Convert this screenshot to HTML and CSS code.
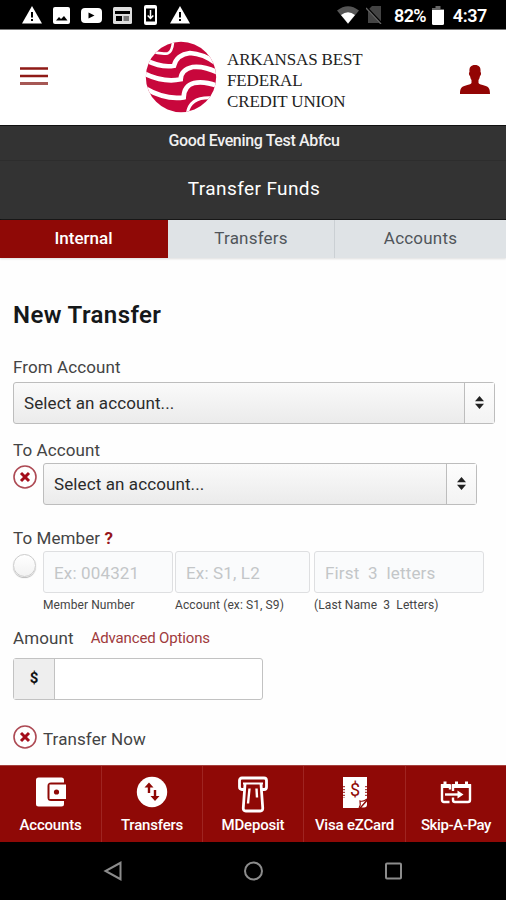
FILE: index.html
```html
<!DOCTYPE html>
<html lang="en">
<head>
    <meta charset="UTF-8">
    <meta name="viewport" content="width=device-width, initial-scale=1.0">
    <title>Transfer Funds</title>
    <link rel="stylesheet" href="styles.css">
</head>
<body>
    <div class="status-bar">
        <div class="status-left">
            <svg width="20" height="18" viewBox="0 0 20 18"><path fill="#fff" d="M10 0L20 17.500H0z"/><path stroke="#000" stroke-width="2" d="M10 6v5.500M10 13v2"/></svg>
            <svg width="17" height="17" viewBox="0 0 17 17"><rect width="17" height="17" rx="2" fill="#fff"/><path d="M3 13.500l3-3.500 2 2 3-3 3.500 4.500z"/></svg>
            <svg width="21" height="15" viewBox="0 0 21 15"><rect width="21" height="15" rx="4" fill="#fff"/><path d="M7.500 4.500l6 3-6 3z"/></svg>
            <svg width="19" height="17" viewBox="0 0 19 17"><rect width="19" height="17" rx="1.500" fill="#ddd"/><path d="M2 4h15v3H2zM3 9h6v5H3z"/><path fill="#777" d="M10.500 9H16v5h-5.500z"/></svg>
            <svg width="13" height="20" viewBox="0 0 13 20"><rect width="13" height="20" rx="2" fill="#fff"/><path d="M2 3.500h9v13H2z"/><path fill="none" stroke="#fff" stroke-width="1.500" d="M6.500 5v8M3.700 10.500l2.800 3 2.800-3"/></svg>
            <svg width="20" height="18" viewBox="0 0 20 18"><path fill="#fff" d="M10 0L20 17.500H0z"/><path stroke="#000" stroke-width="2" d="M10 6v5.500M10 13v2"/></svg>
        </div>
        <div class="status-right">
            <svg class="wifi" width="22" height="18" viewBox="0 0 22 18"><path fill="#555" d="M0 4.500Q11-4 22 4.500L11 18z"/><path fill="#fff" d="M4 9Q11 3.500 18 9l-7 8.500z"/></svg>
            <svg class="sim" width="17" height="18" viewBox="0 0 17 18"><path fill="#444" d="M6 0h9v17H2V4z"/><path stroke="#000" stroke-width="2.500" d="M0 1l16 17"/><path stroke="#666" stroke-width="1.300" d="M0 2l15 16"/></svg>
            <span class="battery-text">82%</span>
            <svg class="battery" width="12" height="19" viewBox="0 0 12 19"><path fill="#666" d="M3.500 0h5v3H12v3H0V2h3.500z"/><path fill="#fff" d="M0 4h12v13.500q0 1.500-1.500 1.500h-9Q0 19 0 17.500z"/></svg>
            <span class="clock">4:37</span>
        </div>
    </div>

    <header class="header">
        <svg class="menu-icon" width="28" height="19" viewBox="0 0 28 19"><path stroke="#8f1a16" stroke-width="2.600" d="M0 1.500h28M0 9h28"/><path stroke="#a65855" stroke-width="3" d="M0 16.500h28"/></svg>
        <div class="brand">
            <svg class="logo" width="72" height="72" viewBox="435 124 216 216">
                <defs><clipPath id="globe"><circle cx="543" cy="232" r="105.500"/></clipPath></defs>
                <g clip-path="url(#globe)">
                    <path fill="#c8073c" d="M435 124h216v216H435z"/>
                    <g fill="none" stroke="#fff" stroke-width="14">
                        <path stroke-width="8" d="M450 154Q480 164 503 161Q517 158 520 120"/>
                        <path d="M430 178Q485 206 522 198Q530 165 570 160Q610 162 650 192"/>
                        <path d="M430 220Q490 250 542 239Q543 210 578 202Q615 198 660 222"/>
                        <path d="M430 263Q495 302 551 293Q552 258 582 250Q615 243 660 262"/>
                        <path stroke-width="9" d="M562 342Q568 292 632 294"/>
                    </g>
                </g>
            </svg>
            <div class="brand-name">ARKANSAS BEST<br>FEDERAL<br>CREDIT UNION</div>
        </div>
        <svg class="user-icon" width="30" height="29" viewBox="0 0 30 29"><path fill="#930504" d="M15 0c4 0 6 2 5.500 7 1 .5.600 3.500-.5 4-.4 2-.8 3-1.500 4v3c1 1.500 3 1.800 6.500 2.700 4 1.200 5 3.300 5 8.300H0c0-5 1-7.100 5-8.300 3.500-.9 5.500-1.200 6.500-2.700v-3c-.7-1-1.100-2-1.500-4-1.100-.5-1.500-3.500-.5-4C9 2 11 0 15 0z"/></svg>
    </header>

    <div class="greeting"><span>Good Evening Test Abfcu</span></div>
    <div class="page-title"><span>Transfer Funds</span></div>
    <div class="tabs">
        <div class="tab active"><span>Internal</span></div>
        <div class="tab"><span>Transfers</span></div>
        <div class="tab"><span>Accounts</span></div>
    </div>

    <main class="content">
        <h1>New Transfer</h1>

        <label class="label from-label">From Account</label>
        <div class="select">
            <span class="select-text">Select an account...</span>
            <span class="select-arrow"><svg width="9" height="13" viewBox="0 0 9 13"><path fill="#222" d="M4.500 0L9 5.300H0zM0 7.700h9L4.500 13z"/></svg></span>
        </div>

        <label class="label to-label">To Account</label>
        <div class="row to-row">
            <svg class="radio" width="24" height="24" viewBox="0 0 24 24"><circle cx="12" cy="12" r="11" fill="#fff" stroke="#ad4a54" stroke-width="1.600"/><path stroke="#a40d1b" stroke-width="3" d="M8 8l8 8M16 8l-8 8"/></svg>
            <div class="select">
                <span class="select-text">Select an account...</span>
                <span class="select-arrow"><svg width="9" height="13" viewBox="0 0 9 13"><path fill="#222" d="M4.500 0L9 5.300H0zM0 7.700h9L4.500 13z"/></svg></span>
            </div>
        </div>

        <label class="label member-label">To Member <b>?</b></label>
        <div class="row member-row">
            <span class="radio radio-off"></span>
            <div class="member-field field-number">
                <div class="input">Ex: 004321</div>
                <small>Member Number</small>
            </div>
            <div class="member-field field-account">
                <div class="input">Ex: S1, L2</div>
                <small>Account (ex: S1, S9)</small>
            </div>
            <div class="member-field field-name">
                <div class="input">First&nbsp; 3&nbsp; letters</div>
                <small>(Last Name&nbsp; 3&nbsp; Letters)</small>
            </div>
        </div>

        <div class="row amount-row">
            <label class="label">Amount</label>
            <a class="advanced">Advanced Options</a>
        </div>
        <div class="amount-input"><span class="prefix">$</span></div>

        <div class="row now-row">
            <svg class="radio" width="24" height="24" viewBox="0 0 24 24"><circle cx="12" cy="12" r="11" fill="#fff" stroke="#ad4a54" stroke-width="1.600"/><path stroke="#a40d1b" stroke-width="3" d="M8 8l8 8M16 8l-8 8"/></svg>
            <label class="label">Transfer Now</label>
        </div>
    </main>

    <nav class="bottom-nav">
        <div class="nav-item">
            <svg width="32" height="34" viewBox="0 0 32 34"><path fill="#fff" d="M3.500 1.500h23Q29 1.500 29 4v2.500H16q-3.500 0-3.500 3.500v11.500Q12.500 25 16 25h13v3q0 2.500-2.500 2.500h-23Q1 30.500 1 28V4Q1 1.500 3.500 1.500z"/><path fill="#fff" d="M14.500 8.500H31V23H14.500z"/><circle cx="21.500" cy="16" r="2.600" fill="#8f0906"/></svg>
            <span>Accounts</span>
        </div>
        <div class="nav-item">
            <svg width="32" height="34" viewBox="0 0 32 34"><circle cx="16" cy="16" r="15.200" fill="#fff"/><path fill="none" stroke="#8f0906" stroke-width="2.400" d="M13 17V10M19 14v8"/><path fill="#8f0906" d="M8.500 11.500L13 6.500l4.500 5zM14.500 20h9L19 25z"/></svg>
            <span>Transfers</span>
        </div>
        <div class="nav-item">
            <svg class="icon-deposit" width="32" height="38" viewBox="0 0 32 38"><path fill="none" stroke="#fff" stroke-width="2.800" stroke-linejoin="round" d="M7 13.500H5q-2.500 0-2.500-2.500V4.500Q2.500 2 5 2h22q2.500 0 2.500 2.500V11q0 2.500-2.500 2.500h-2"/><path fill="none" stroke="#fff" stroke-width="2" d="M6 7.500h20"/><path fill="none" stroke="#fff" stroke-width="2.800" stroke-linejoin="round" d="M8 8L6.300 31.500q-.3 3.500 2.500 3.500h14.400q2.800 0 2.500-3.500L24 8"/><path stroke="#fff" stroke-width="2.400" d="M12.500 12.500l-1.500 15M19.500 12.500l.5 9"/></svg>
            <span>MDeposit</span>
        </div>
        <div class="nav-item">
            <svg width="32" height="34" viewBox="0 0 32 34"><path fill="#fff" d="M4 1h24v22l-8 9H4z"/><path fill="#fff" stroke="#8f0906" stroke-width="1.200" d="M20 32q2-3 1-7 4 1 7-2"/><path fill="#fff" d="M22.500 31.500l5.500-6v3q0 3-3 3z"/><path stroke="#8f0906" stroke-width="1.500" stroke-dasharray="1.300 1.600" d="M5 10v12M27 10v10"/><text class="bill-sign" x="16" y="20" text-anchor="middle">$</text></svg>
            <span>Visa eZCard</span>
        </div>
        <div class="nav-item nav-skip">
            <svg width="32" height="34" viewBox="0 0 32 34"><g fill="none" stroke="#fff" stroke-width="2.400"><path d="M9.500 26H4q-2 0-2-2V9.500h8v4"/><path d="M13 15V9.500h17v14.500q0 2-2 2H15q-2 0-2-2V21.500"/><path d="M5 18.500h14"/></g><path fill="#fff" d="M1 8h9v4H1zM12 8h19v4H12zM3.500 5.500h3v4h-3zM15 5.500h3v4h-3zM25 5.500h3v4h-3zM17.500 14.500l6 4-6 4z"/></svg>
            <span>Skip-A-Pay</span>
        </div>
    </nav>

    <div class="system-nav">
        <svg width="20" height="20" viewBox="0 0 20 20"><path d="M17.500 1.800v16.400L2.500 10z"/></svg>
        <svg width="20" height="20" viewBox="0 0 20 20"><circle cx="10.500" cy="10" r="8.500"/></svg>
        <svg width="20" height="20" viewBox="0 0 20 20"><rect x="3" y="2.500" width="15" height="15" rx="1"/></svg>
    </div>
</body>
</html>
```
FILE: styles.css
```css
* {
    box-sizing: border-box;
}
body {
    margin: 0;
    height: 900px;
    display: flex;
    flex-direction: column;
    overflow: hidden;
    background: #fefefe;
    color: #2b2b2b;
    font-family: Roboto, sans-serif;
    font-size: 17px;
}
svg {
    display: block;
    flex: none;
}
span, label, small {
    white-space: nowrap;
}
.status-bar {
    height: 30px;
    flex: none;
    display: flex;
    justify-content: space-between;
    align-items: center;
    padding: 1px 19px 0 22px;
    background: #000;
    border-bottom: 1px solid #777;
    color: #fff;
}
.status-left, .status-right {
    display: flex;
    align-items: center;
}
.status-left {
    gap: 11px;
}
.status-left svg:nth-child(5) {
    margin: 0 2px 0 3px;
}
.status-left svg:nth-child(n+5) {
    position: relative;
    left: -2px;
}
.sim {
    margin-left: 7px;
}
.battery-text, .clock {
    font-size: 18px;
    font-weight: 600;
    line-height: 20px;
    margin-top: 2px;
}
.battery-text {
    margin-left: 11px;
    letter-spacing: -0.7px;
}
.clock {
    letter-spacing: -0.4px;
}
.battery {
    margin: 0 9px 0 6px;
}
.header {
    height: 95px;
    flex: none;
    display: flex;
    align-items: center;
    padding: 0 16px 0 20px;
    background: #fff;
}
.menu-icon {
    margin-top: -3px;
}
.brand {
    display: flex;
    align-items: center;
    margin-left: 97px;
}
.logo {
    margin-top: -1px;
}
.brand-name {
    margin: 5px 0 0 10px;
    width: 150px;
    font-family: "Liberation Serif", serif;
    font-size: 17px;
    line-height: 21px;
    letter-spacing: -0.15px;
    color: #222;
}
.user-icon {
    margin: 3px 0 0 auto;
}
.greeting, .page-title {
    flex: none;
    display: flex;
    align-items: center;
    justify-content: center;
    background: #333;
    color: #f0f0f0;
}
.greeting {
    height: 36px;
    padding: 0 0 5px 2px;
    border-top: 1px solid #111;
    border-bottom: 1px solid #2d2d2d;
    font-size: 16px;
    font-weight: 500;
    letter-spacing: -0.35px;
}
.page-title {
    height: 59px;
    padding: 0 0 3px 2px;
    border-bottom: 1px solid #080808;
    font-size: 19px;
    letter-spacing: 0.4px;
    color: #fff;
}
.tabs {
    height: 38px;
    flex: none;
    display: grid;
    grid-template-columns: 168px 167px 1fr;
    box-shadow: 0 1px 2px #ddd;
}
.tab {
    display: flex;
    align-items: center;
    justify-content: center;
    padding-bottom: 2px;
    background: #dfe3e6;
    border-right: 1px solid #cbd0d4;
    color: #50555a;
    letter-spacing: 0.2px;
}
.tab:last-child {
    border-right: none;
}
.tab.active {
    background: #8f0906;
    border-color: #8f0906;
    color: #fff;
    font-weight: 500;
    letter-spacing: 0;
}
.content {
    flex: 1;
    min-height: 0;
    padding: 0 11px 0 13px;
}
h1 {
    margin: 43px 0 0;
    font-size: 24px;
    line-height: 28px;
    font-weight: 600;
    letter-spacing: 0.4px;
    color: #15181a;
}
.label {
    display: block;
    line-height: 20px;
    letter-spacing: 0.1px;
    color: #444;
}
.from-label {
    margin-top: 28px;
}
.to-label {
    margin-top: 16px;
}
.member-label {
    margin-top: 23px;
}
.member-label b {
    color: #96161a;
}
.select {
    height: 42px;
    margin-top: 5px;
    display: flex;
    border: 1px solid #bdbdbd;
    border-radius: 3px;
    background: linear-gradient(#fafafa, #ebebeb);
}
.select-text {
    flex: 1;
    padding-left: 10px;
    line-height: 40px;
    letter-spacing: 0.1px;
}
.select-arrow {
    width: 30px;
    padding-bottom: 2px;
    display: flex;
    align-items: center;
    justify-content: center;
    border-left: 1px solid #bdbdbd;
    background: linear-gradient(#fdfdfd, #f3f3f3);
}
.row {
    display: flex;
}
.to-row .select {
    width: 434px;
    margin: 3px 0 0 6px;
}
.radio {
    width: 24px;
    height: 24px;
    flex: none;
}
.to-row .radio {
    margin-top: 5px;
}
.radio-off {
    width: 23px;
    height: 23px;
    margin: 5px 7px 0 0;
    border: 1px solid #ccc;
    border-radius: 50%;
    background: linear-gradient(#fff, #f2f2f2);
    box-shadow: 0 1px 1px #bbb;
}
.member-row {
    margin-top: 1px;
}
.input {
    height: 42px;
    margin-top: 2px;
    padding-left: 10px;
    border: 1px solid #dedfe1;
    border-radius: 3px;
    background: #fafbfc;
    color: #c3c6c8;
    line-height: 42px;
    letter-spacing: 0.15px;
    white-space: nowrap;
}
.member-field small {
    display: block;
    margin-top: 5px;
    font-size: 12px;
    line-height: 15px;
    letter-spacing: 0.1px;
    color: #444;
}
.field-number {
    width: 130px;
}
.field-account {
    width: 135px;
    margin-left: 2px;
}
.field-name {
    width: 170px;
    margin-left: 4px;
}
.amount-row {
    margin-top: 15px;
}
.advanced {
    margin-left: 17px;
    font-size: 15px;
    line-height: 21px;
    letter-spacing: -0.15px;
    color: #a03a3c;
}
.amount-input {
    width: 250px;
    height: 42px;
    margin-top: 9px;
    display: flex;
    border: 1px solid #c2c2c2;
    border-radius: 3px;
    background: #fff;
}
.prefix {
    width: 41px;
    border-right: 1px solid #c2c2c2;
    background: #eee;
    font-size: 15px;
    font-weight: 700;
    line-height: 38px;
    text-align: center;
    color: #111;
}
.now-row {
    margin-top: 25px;
    align-items: center;
}
.now-row .label {
    margin: 3px 0 0 6px;
}
.bottom-nav {
    height: 77px;
    flex: none;
    display: grid;
    grid-template-columns: 102px 101px 101px 102px 100px;
    background: #8f0906;
    border-top: 1px solid #a5403e;
}
.nav-item {
    display: flex;
    flex-direction: column;
    align-items: center;
    padding-top: 10px;
    border-right: 1px solid #9f2421;
    color: #fff;
    font-size: 15px;
    font-weight: 500;
    letter-spacing: -0.2px;
}
.nav-item:last-child {
    border-right: none;
}
.nav-item span {
    margin-top: 6px;
    line-height: 18px;
}
.nav-item.nav-skip {
    letter-spacing: -0.4px;
}
.nav-item .icon-deposit {
    margin-bottom: -4px;
}
.bill-sign {
    fill: #8f0906;
    font-size: 18px;
    font-weight: 400;
}
.system-nav {
    height: 58px;
    flex: none;
    display: flex;
    justify-content: center;
    align-items: center;
    gap: 120px;
    background: #000;
}
.system-nav svg {
    fill: none;
    stroke: #8c8c8c;
    stroke-width: 2;
}
```
